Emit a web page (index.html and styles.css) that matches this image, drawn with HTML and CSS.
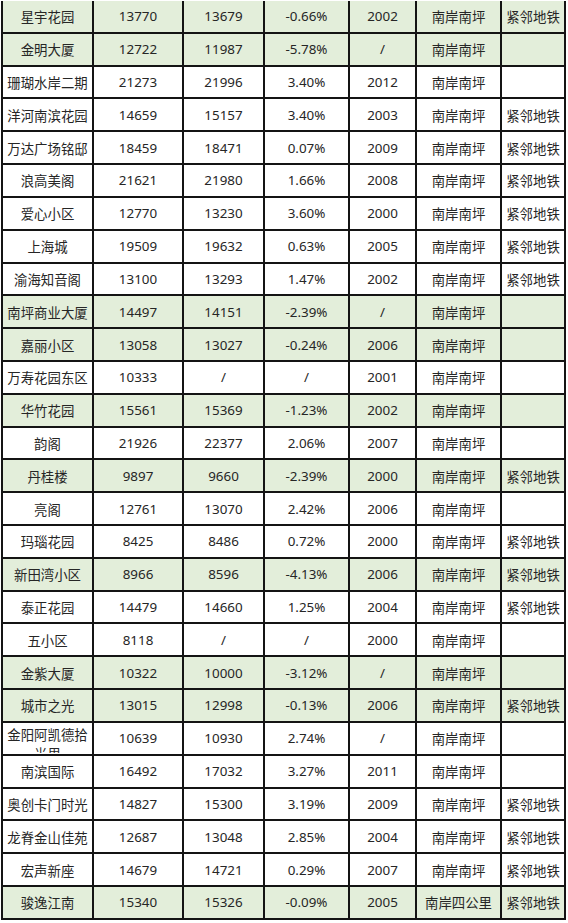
FILE: index.html
```html
<!DOCTYPE html>
<html lang="zh-CN">
<head>
<meta charset="utf-8">
<title>南岸南坪楼盘价格</title>
<link rel="stylesheet" href="styles.css">
</head>
<body>
<table class="prices">
<colgroup>
<col class="c-name"><col class="c-num"><col class="c-num2"><col class="c-pct"><col class="c-year"><col class="c-area"><col class="c-metro">
</colgroup>
<tbody>
<tr class="down first"><td>星宇花园</td><td>13770</td><td>13679</td><td>-0.66%</td><td>2002</td><td>南岸南坪</td><td>紧邻地铁</td></tr>
<tr class="down"><td>金明大厦</td><td>12722</td><td>11987</td><td>-5.78%</td><td>/</td><td>南岸南坪</td><td></td></tr>
<tr><td>珊瑚水岸二期</td><td>21273</td><td>21996</td><td>3.40%</td><td>2012</td><td>南岸南坪</td><td></td></tr>
<tr><td>洋河南滨花园</td><td>14659</td><td>15157</td><td>3.40%</td><td>2003</td><td>南岸南坪</td><td>紧邻地铁</td></tr>
<tr><td>万达广场铭邸</td><td>18459</td><td>18471</td><td>0.07%</td><td>2009</td><td>南岸南坪</td><td>紧邻地铁</td></tr>
<tr><td>浪高美阁</td><td>21621</td><td>21980</td><td>1.66%</td><td>2008</td><td>南岸南坪</td><td>紧邻地铁</td></tr>
<tr><td>爱心小区</td><td>12770</td><td>13230</td><td>3.60%</td><td>2000</td><td>南岸南坪</td><td>紧邻地铁</td></tr>
<tr><td>上海城</td><td>19509</td><td>19632</td><td>0.63%</td><td>2005</td><td>南岸南坪</td><td>紧邻地铁</td></tr>
<tr><td>渝海知音阁</td><td>13100</td><td>13293</td><td>1.47%</td><td>2002</td><td>南岸南坪</td><td>紧邻地铁</td></tr>
<tr class="down"><td>南坪商业大厦</td><td>14497</td><td>14151</td><td>-2.39%</td><td>/</td><td>南岸南坪</td><td></td></tr>
<tr class="down"><td>嘉丽小区</td><td>13058</td><td>13027</td><td>-0.24%</td><td>2006</td><td>南岸南坪</td><td></td></tr>
<tr><td>万寿花园东区</td><td>10333</td><td>/</td><td>/</td><td>2001</td><td>南岸南坪</td><td></td></tr>
<tr class="down"><td>华竹花园</td><td>15561</td><td>15369</td><td>-1.23%</td><td>2002</td><td>南岸南坪</td><td></td></tr>
<tr><td>韵阁</td><td>21926</td><td>22377</td><td>2.06%</td><td>2007</td><td>南岸南坪</td><td></td></tr>
<tr class="down"><td>丹桂楼</td><td>9897</td><td>9660</td><td>-2.39%</td><td>2000</td><td>南岸南坪</td><td>紧邻地铁</td></tr>
<tr><td>亮阁</td><td>12761</td><td>13070</td><td>2.42%</td><td>2006</td><td>南岸南坪</td><td></td></tr>
<tr><td>玛瑙花园</td><td>8425</td><td>8486</td><td>0.72%</td><td>2000</td><td>南岸南坪</td><td>紧邻地铁</td></tr>
<tr class="down"><td>新田湾小区</td><td>8966</td><td>8596</td><td>-4.13%</td><td>2006</td><td>南岸南坪</td><td>紧邻地铁</td></tr>
<tr><td>泰正花园</td><td>14479</td><td>14660</td><td>1.25%</td><td>2004</td><td>南岸南坪</td><td>紧邻地铁</td></tr>
<tr><td>五小区</td><td>8118</td><td>/</td><td>/</td><td>2000</td><td>南岸南坪</td><td></td></tr>
<tr class="down"><td>金紫大厦</td><td>10322</td><td>10000</td><td>-3.12%</td><td>/</td><td>南岸南坪</td><td></td></tr>
<tr class="down"><td>城市之光</td><td>13015</td><td>12998</td><td>-0.13%</td><td>2006</td><td>南岸南坪</td><td>紧邻地铁</td></tr>
<tr><td><div class="clip">金阳阿凯德拾光里</div></td><td>10639</td><td>10930</td><td>2.74%</td><td>/</td><td>南岸南坪</td><td></td></tr>
<tr><td>南滨国际</td><td>16492</td><td>17032</td><td>3.27%</td><td>2011</td><td>南岸南坪</td><td></td></tr>
<tr><td>奥创卡门时光</td><td>14827</td><td>15300</td><td>3.19%</td><td>2009</td><td>南岸南坪</td><td>紧邻地铁</td></tr>
<tr><td>龙脊金山佳苑</td><td>12687</td><td>13048</td><td>2.85%</td><td>2004</td><td>南岸南坪</td><td>紧邻地铁</td></tr>
<tr><td>宏声新座</td><td>14679</td><td>14721</td><td>0.29%</td><td>2007</td><td>南岸南坪</td><td>紧邻地铁</td></tr>
<tr class="down"><td>骏逸江南</td><td>15340</td><td>15326</td><td>-0.09%</td><td>2005</td><td>南岸四公里</td><td>紧邻地铁</td></tr>
</tbody>
</table>
</body>
</html>
```
FILE: styles.css
```css
html, body {
  margin: 0;
  padding: 0;
  background: #ffffff;
}

.prices {
  border-collapse: collapse;
  table-layout: fixed;
  width: 563px;
  margin: 1px 0 0 1px;
  font-family: "Noto Sans", "Noto Sans CJK SC", sans-serif;
  font-size: 13.4px;
  color: #262626;
}

.c-name { width: 91px; }
.c-num { width: 90px; }
.c-num2 { width: 81px; }
.c-pct { width: 85px; }
.c-year { width: 67px; }
.c-area { width: 85px; }
.c-metro { width: 64px; }

.prices td {
  border: 2px solid #141414;
  height: 30.82px;
  padding: 0;
  text-align: center;
  vertical-align: middle;
  white-space: nowrap;
  overflow: hidden;
}

.prices tr.first td {
  border-top: none;
}

.prices tr.down td {
  background: #e3eeda;
}

.prices td .clip {
  white-space: normal;
  height: 30px;
  line-height: 19px;
  padding-top: 3px;
  box-sizing: border-box;
  overflow: hidden;
  word-break: break-all;
}
```
